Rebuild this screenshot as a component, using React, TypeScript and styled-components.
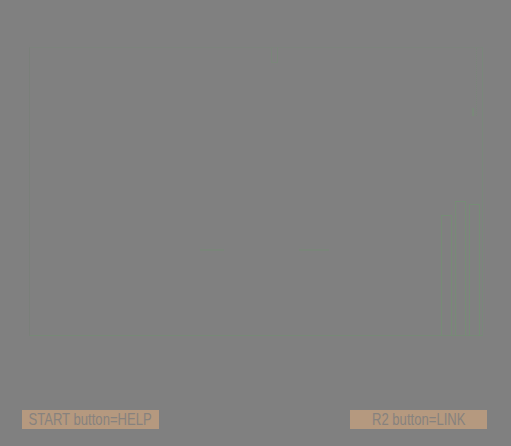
import styled, { createGlobalStyle } from 'styled-components';

const GlobalStyle = createGlobalStyle`
    html, body {
        margin: 0;
        padding: 0;
        background: #808080;
    }
`;

const Screen = styled.div`
    width: 511px;
    height: 446px;
    display: flex;
    flex-direction: column;
    background: #808080;
    font-family: 'Liberation Sans', Arial, sans-serif;
`;

const Panel = styled.div`
    margin: 47px 0 0 29px;
    width: 452px;
    height: 287px;
    border-top: 1px solid #7c837c;
    border-left: 1px solid #7a7f7a;
    border-right: 1px solid #79877a;
    border-bottom: 1px solid #778977;
    display: flex;
    flex-direction: column;
`;

const TopRow = styled.div`
    display: flex;
    justify-content: space-between;
    height: 68px;
`;

const Tab = styled.div`
    margin-left: 241px;
    width: 5px;
    height: 14px;
    border: 1px solid #7a867a;
    border-top: none;
`;

const Dotted = styled.div`
    display: flex;
    align-items: flex-end;
    gap: 2px;
    margin-right: 5px;
    height: 68px;
`;

const Mark = styled.div`
    width: 2px;
    height: 8px;
    background: #798979;
`;

const DotLine = styled.div`
    height: 100%;
    border-right: 1px dotted #798679;
`;

const Middle = styled.div`
    flex: 1;
    display: flex;
    align-items: flex-end;
    justify-content: space-between;
`;

const Dashes = styled.div`
    display: flex;
    gap: 75px;
    margin: 0 0 84px 170px;
`;

const Dash = styled.div<{ w: number }>`
    width: ${p => p.w}px;
    height: 2px;
    background: #7a857a;
`;

const Bars = styled.div`
    display: flex;
    align-items: flex-end;
    gap: 3px;
    margin-right: 2px;
`;

const Bar = styled.div<{ h: number }>`
    width: 9px;
    height: ${p => p.h}px;
    border: 1px solid #768c76;
    border-bottom: none;
    border-radius: 1px 1px 0 0;
`;

const Footer = styled.div`
    margin-top: 74px;
    display: flex;
    justify-content: space-between;
    padding: 0 24px 0 22px;
`;

const Label = styled.div`
    width: 137px;
    height: 19px;
    background: #b5997f;
    display: flex;
    align-items: center;
    justify-content: center;
    overflow: hidden;
`;

const LabelText = styled.span`
    display: inline-block;
    color: #87827e;
    font-size: 17px;
    line-height: 19px;
    white-space: nowrap;
    transform: scaleX(0.77);
`;

const bars = [119, 133, 130];

export default function App() {
    return (
        <Screen>
            <GlobalStyle />
            <Panel>
                <TopRow>
                    <Tab />
                    <Dotted>
                        <Mark />
                        <DotLine />
                    </Dotted>
                </TopRow>
                <Middle>
                    <Dashes>
                        <Dash w={24} />
                        <Dash w={30} />
                    </Dashes>
                    <Bars>
                        {bars.map((h, i) => (
                            <Bar key={i} h={h} />
                        ))}
                    </Bars>
                </Middle>
            </Panel>
            <Footer>
                <Label><LabelText>START button=HELP</LabelText></Label>
                <Label><LabelText>R2 button=LINK</LabelText></Label>
            </Footer>
        </Screen>
    );
}
